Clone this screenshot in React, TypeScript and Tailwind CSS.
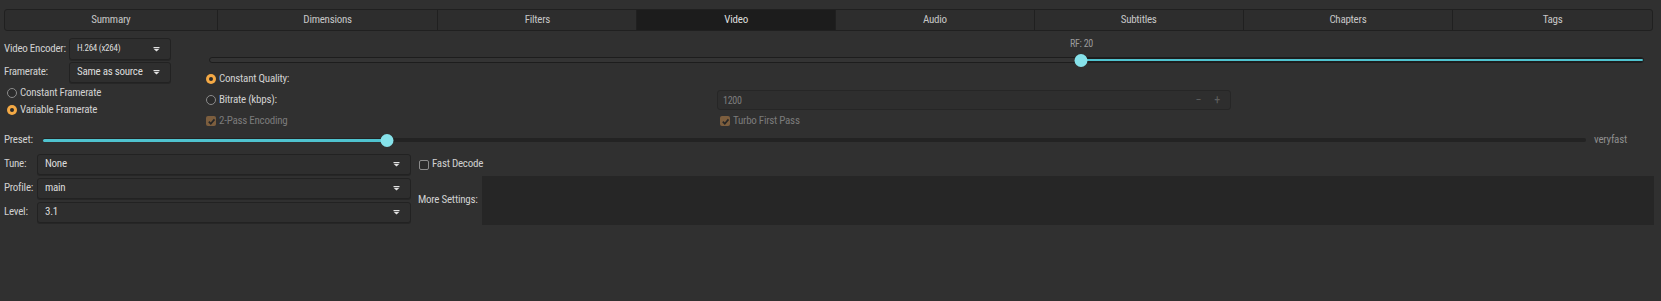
import React from "react";

const tabs = [
  { name: "Summary", w: "w-[213px]" },
  { name: "Dimensions", w: "w-[221px]" },
  { name: "Filters", w: "w-[199px]" },
  { name: "Video", w: "w-[199px]" },
  { name: "Audio", w: "w-[199px]" },
  { name: "Subtitles", w: "w-[209px]" },
  { name: "Chapters", w: "w-[210px]" },
  { name: "Tags", w: "w-[199px]" },
];

const Arrow = () => (
  <svg width="7" height="5" viewBox="0 0 7 5" className="shrink-0">
    <rect x="0.5" y="0" width="6" height="1" fill="#e2e2e2" />
    <path d="M0.5 1.8 L6.5 1.8 L3.5 4.6 Z" fill="#e2e2e2" />
  </svg>
);

const Combo = ({ value, className, small }: { value: string; className: string; small?: boolean }) => (
  <div
    className={`flex items-center justify-between rounded-[3px] border border-[#222222] bg-[#2e2e2e] pl-[7px] pr-[10px] shadow-[0_1px_0_#262626] ${className}`}
  >
    <span className={small ? "text-[9px] text-[#dcdcdc]" : "text-[11px] text-[#dcdcdc]"}>{value}</span>
    <Arrow />
  </div>
);

const Radio = ({ label, checked }: { label: string; checked?: boolean }) => (
  <div className="flex h-[14px] items-center gap-[3px] whitespace-nowrap">
    {checked ? (
      <span className="flex h-[10px] w-[10px] items-center justify-center rounded-full bg-[#f4a945]">
        <span className="h-[4px] w-[4px] rounded-full bg-[#2a2a2a]" />
      </span>
    ) : (
      <span className="h-[10px] w-[10px] rounded-full border border-[#8c8c8c] bg-[#2b2b2b]" />
    )}
    <span className="text-[11px] text-[#d0d0d0]">{label}</span>
  </div>
);

const Check = ({ label, checked, disabled }: { label: string; checked?: boolean; disabled?: boolean }) => (
  <div className="flex h-[14px] items-center gap-[3px] whitespace-nowrap">
    {checked ? (
      <span
        className={`flex h-[10px] w-[10px] items-center justify-center rounded-[2px] ${
          disabled ? "bg-[#7c5e3e]" : "bg-[#f4a945]"
        }`}
      >
        <svg width="9" height="9" viewBox="0 0 10 10">
          <path d="M2 5.2 L4.2 7.5 L8.3 2.6" stroke="#262626" strokeWidth="1.9" fill="none" />
        </svg>
      </span>
    ) : (
      <span className="h-[10px] w-[10px] rounded-[2px] border border-[#8c8c8c] bg-[#2b2b2b]" />
    )}
    <span className={`text-[11px] ${disabled ? "text-[#7b7b7b]" : "text-[#d0d0d0]"}`}>{label}</span>
  </div>
);

const RfSlider = ({ pos }: { pos: number }) => (
  <div className="ml-[3px] w-[1435px]">
    <div className="relative h-[14px]">
      <span
        className="absolute top-0 -translate-x-1/2 text-[10px] leading-[14px] text-[#9a9a9a]"
        style={{ left: `${pos * 100}%` }}
      >
        RF: 20
      </span>
    </div>
    <div className="relative mt-[2px] flex h-[14px] items-center">
      <div className="h-[6px] w-full rounded-full border border-[#1d1d1d] bg-[#343434]" />
      <div
        className="absolute right-0 h-[4px] rounded-full border border-[#1d1d1d] bg-[#4fc3cf]"
        style={{ left: `${pos * 100}%` }}
      />
      <div
        className="absolute h-[13px] w-[13px] -translate-x-1/2 rounded-full bg-[#86e2ea]"
        style={{ left: `${pos * 100}%` }}
      />
    </div>
  </div>
);

const PresetSlider = ({ pos }: { pos: number }) => (
  <div className="relative flex h-[14px] w-[1543px] items-center">
    <div className="h-[4px] w-full rounded-full bg-[#232323]" />
    <div className="absolute left-0 h-[3px] rounded-full bg-[#4fc3cf]" style={{ width: `${pos * 100}%` }} />
    <div
      className="absolute h-[13px] w-[13px] -translate-x-1/2 rounded-full bg-[#86e2ea]"
      style={{ left: `${pos * 100}%` }}
    />
  </div>
);

export default function App() {
  return (
    <div className="h-[301px] w-[1661px] overflow-hidden whitespace-nowrap bg-[#303030] pl-1 pt-[9px] font-['Liberation_Sans_Narrow','Roboto_Condensed',Roboto,sans-serif] tracking-[-0.25px] text-[#d0d0d0]">
      {/* Tabs */}
      <div className="flex h-[22px] w-[1649px] rounded-[3px] border border-[#202020] bg-[#2d2d2d]">
        {tabs.map((t, i) => (
          <div
            key={t.name}
            className={`flex items-center justify-center text-[11px] ${t.w} ${
              i < tabs.length - 1 ? "border-r border-[#202020]" : ""
            } ${t.name === "Video" ? "bg-[#1c1c1c] text-[#dedede]" : "text-[#c6c6c6]"}`}
          >
            {t.name}
          </div>
        ))}
      </div>

      {/* Encoder + quality */}
      <div className="flex items-start">
        <div className="w-[202px] pt-[7px]">
          <div className="flex h-[22px] items-center">
            <span className="w-[65px] text-[11px]">Video Encoder:</span>
            <Combo value="H.264 (x264)" small className="h-[22px] w-[102px]" />
          </div>
          <div className="mt-[2px] flex h-[21px] items-center">
            <span className="w-[65px] text-[11px]">Framerate:</span>
            <Combo value="Same as source" className="h-[21px] w-[102px]" />
          </div>
          <div className="ml-[3px] mt-[3px]">
            <Radio label="Constant Framerate" />
          </div>
          <div className="ml-[3px] mt-[3px]">
            <Radio label="Variable Framerate" checked />
          </div>
        </div>

        <div className="flex-1 pt-[6px]">
          <RfSlider pos={0.608} />
          <div className="mt-[5px]">
            <Radio label="Constant Quality:" checked />
          </div>
          <div className="mt-[4px] grid h-[20px] grid-cols-[511px_514px] items-center">
            <Radio label="Bitrate (kbps):" />
            <div className="flex h-[20px] items-center justify-between rounded-[3px] border border-[#262626] bg-[#2e2e2e] pl-[5px] pr-[10px]">
              <span className="text-[10px] text-[#7e7e7e]">1200</span>
              <div className="flex items-center gap-[13px] text-[12px] text-[#5e5e5e]">
                <span>−</span>
                <span>+</span>
              </div>
            </div>
          </div>
          <div className="mt-[4px] grid grid-cols-[511px_514px] items-center">
            <Check label="2-Pass Encoding" checked disabled />
            <div className="pl-[3px]">
              <Check label="Turbo First Pass" checked disabled />
            </div>
          </div>
        </div>
      </div>

      {/* Preset */}
      <div className="mt-[5px] flex h-[14px] items-center">
        <span className="w-[39px] text-[11px]">Preset:</span>
        <PresetSlider pos={0.223} />
        <span className="ml-[8px] text-[11px] text-[#8e8e8e]">veryfast</span>
      </div>

      {/* Tune / Profile / Level */}
      <div className="mt-[7px] flex items-start">
        <div className="flex w-[407px] flex-col gap-[3px]">
          {[
            ["Tune:", "None"],
            ["Profile:", "main"],
            ["Level:", "3.1"],
          ].map(([label, value]) => (
            <div key={label} className="flex h-[21px] items-center">
              <span className="w-[33px] text-[11px]">{label}</span>
              <Combo value={value} className="h-[21px] w-[374px]" />
            </div>
          ))}
        </div>
        <div className="w-[1243px]">
          <div className="flex h-[21px] items-center pl-[8px]">
            <Check label="Fast Decode" />
          </div>
          <div className="mt-[1px] flex items-center pl-[7px]">
            <span className="w-[64px] text-[11px]">More Settings:</span>
            <div className="h-[49px] w-[1172px] bg-[#262626]" />
          </div>
        </div>
      </div>
    </div>
  );
}
